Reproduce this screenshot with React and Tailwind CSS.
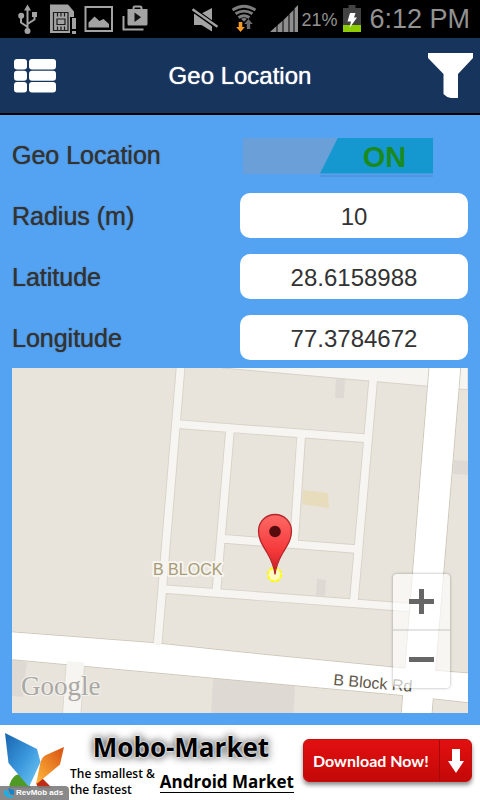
import React, { useState } from 'react'

const UsbIcon = () => (
  <svg className="w-[26px] h-[38px]" viewBox="16 0 26 38" fill="none" stroke="#a3a3a3" strokeWidth="2">
    <path d="M27.500 9v21M27.500 27l-6.500-4.500v-6M27.500 24l7-4.500v-5" />
    <path d="M27.500 4.500l3.500 6h-7z" fill="#a3a3a3" stroke="none" />
    <circle cx="21.200" cy="15.800" r="3" fill="#a3a3a3" stroke="none" />
    <path d="M32 12h5v5h-5z" fill="#a3a3a3" stroke="none" />
    <circle cx="27.500" cy="31" r="3" fill="#a3a3a3" stroke="none" />
  </svg>
)

const SimIcon = () => (
  <svg className="w-[28px] h-[38px]" viewBox="49 0 28 38" fill="#a3a3a3">
    <path d="M50 4.500h18l6 7v5.500h-4v16H50z" />
    <path d="M72 18h4v11h-4zM72 31h4v3h-4z" />
    <g fill="none" stroke="#1c1c1c" strokeWidth="1.200">
      <path d="M53.500 12.500h14.500v18H53.500zM57 19h8v5.500h-8zM57.500 12.500v4M61 12.500v4M64.500 12.500v4M57.500 30.500v-4M61 30.500v-4M64.500 30.500v-4" />
    </g>
  </svg>
)

const PictureIcon = () => (
  <svg className="w-[30px] h-[38px]" viewBox="84 0 30 38" fill="#a3a3a3">
    <path d="M85.500 7h26.500v24H85.500z" fill="none" stroke="#a3a3a3" strokeWidth="2" />
    <path d="M88.500 27.500v-5l6-6 5 4.500 4-2 5.500 5v3.500z" />
  </svg>
)

const PlayStoreIcon = () => (
  <svg className="w-[28px] h-[38px]" viewBox="121 0 28 38" fill="#a3a3a3">
    <path d="M127.500 9h20v15q0 1.500-1.500 1.500h-17q-1.500 0-1.500-1.500z" />
    <path d="M133.500 9V8q0-1.500 1.500-1.500h5q1.500 0 1.500 1.500v1M123.500 16v13.500h20" fill="none" stroke="#a3a3a3" strokeWidth="2" />
    <path d="M134.500 12.500v9.500l6.500-4.700z" fill="#111" />
  </svg>
)

const MuteIcon = () => (
  <svg className="w-[28px] h-[38px]" viewBox="190 0 28 38" fill="#a3a3a3">
    <path d="M193 13.500h7.500L211 8v23.500l-10.500-6.500H193z" />
    <path d="M189 7.500l28 20" stroke="#000" strokeWidth="5" />
    <path d="M191.500 9.200l25 17.500" stroke="#a3a3a3" strokeWidth="2.300" />
  </svg>
)

const WifiIcon = () => (
  <svg className="w-[28px] h-[38px]" viewBox="229 0 28 38" fill="none" stroke="#7d7d7d" strokeWidth="2.800">
    <path d="M231.500 10q11.500-7.500 23 0M234.500 13.800q8.500-5.300 17 0M237.500 17.500q5.500-3.500 11 0" />
    <path d="M240 18.800q3-1.800 6 0l-3 3z" fill="#7d7d7d" stroke="none" />
    <path d="M247.500 19l4.300 5h-2.600v5h-3.400v-5h-2.600z" fill="#6b6b6b" stroke="none" />
    <path d="M237.700 22h3.600v5h2.500l-4.300 5-4.300-5h2.500z" fill="#f59a23" stroke="none" />
  </svg>
)

const SignalIcon = () => (
  <svg className="w-[30px] h-[38px]" viewBox="268 0 30 38" fill="#8f8f8f">
    <path d="M269 32l6.500-6V32zM276.500 25.200l5-4.500V32h-5zM282.500 20l5-5V32h-5zM288.500 14l4-4V32h-4zM293.500 8.500l3.500-3.500v27h-3.500z" />
  </svg>
)

const BatteryIcon = () => (
  <svg className="w-[18px] h-[38px]" viewBox="342 0 18 38">
    <path d="M347.500 5h7v3h5.500v24h-18V8h5.500z" fill="#424242" />
    <path d="M342 25h18v7h-18z" fill="#8ccc00" />
    <path d="M349 13h5.500l-1.500 4.500h3L348.500 28l1.500-6.500h-3.500z" fill="#fff" />
  </svg>
)

const ListIcon = () => (
  <svg className="w-[42px] h-[34px]" viewBox="0 0 42 34" fill="#fff">
    <rect x="0" y="0" width="13" height="10.500" rx="3" />
    <rect x="15" y="0" width="27" height="10.500" rx="3" />
    <rect x="0" y="11.800" width="13" height="10" rx="3" />
    <rect x="15" y="11.800" width="27" height="10" rx="3" />
    <rect x="0" y="23" width="13" height="10.500" rx="3" />
    <rect x="15" y="23" width="27" height="10.500" rx="3" />
  </svg>
)

const FunnelIcon = () => (
  <svg className="w-[45px] h-[45px]" viewBox="0 0 45 45" fill="#fff">
    <path d="M0 0h45v5L30 21v24h-7q-5-1-7.500-4V21L0 5z" />
  </svg>
)

const MapDrawing = () => (
  <svg
    className="absolute inset-0 w-full h-full"
    viewBox="12 368 456 345"
    preserveAspectRatio="xMidYMid slice"
  >
    <rect x="12" y="368" width="456" height="345" fill="#e8e4dc" />

    {/* Buildings */}
    <g fill="#dedad3">
      <path d="M336 377l9 1-1 20h-9zM453.700 460l14.300 1v14l-15-1.300zM317 579l9 1-1 16-9-.7z" />
      <path d="M12 660l15 2-4 35-11-1zM213.300 678l81.700 8-1.700 27H211z" />
    </g>
    <path d="M303 490l25 3 1 15-27-3.700z" fill="#e7dcbb" />

    {/* Small streets: casing first, then fill */}
    <g fill="none" stroke="#d8d2c7" strokeWidth="9.500">
      <path d="M180.700 366L157.500 646M178 424.200l190 14.200M230 430l-13.500 160M301.500 433L294 543M373.500 376L353.700 603M221 538.700L356 549M163 589l247 18.500" />
      <path d="M75.500 662L71.500 716" strokeWidth="19" />
    </g>
    <path d="M222 368l246 21.800V360H222z" fill="#f6f5f1" stroke="#d8d2c7" />
    <g fill="none" stroke="#f6f5f1" strokeWidth="7.700">
      <path d="M180.700 366L157.500 646M178 424.200l190 14.200M230 430l-13.500 160M301.500 431L294 543M373.500 376L353.700 603M221 538.700L356 549M163 589l247 18.500" />
      <path d="M75.500 662L71.500 716" strokeWidth="17.500" />
    </g>

    {/* Main roads */}
    <g stroke="#cbc4b4" strokeWidth="1.500">
      <path d="M429.500 366h31L431.500 715H401.500z" />
      <path d="M10 632l143.300 11L240 652.300l165 16.200L470 673.500v29L401.700 695 240 680.300 10 659z" />
    </g>
    <g fill="#fff">
      <path d="M429.500 366h31L431.500 715H401.500z" />
      <path d="M10 632l143.300 11L240 652.300l165 16.200L470 673.500v29L401.700 695 240 680.300 10 659z" />
    </g>
    <path d="M153.900 640h7.700l-.3 5h-7.700zM67 661l17.500 1.500-.3 5-17.500-1z" fill="#f6f5f1" />

    {/* Labels */}
    <g className="[font-family:'Liberation_Sans',sans-serif] text-[16px]" strokeLinejoin="round">
      <text x="153" y="575" fill="#a89b78" stroke="#f6f4ee" strokeWidth="4" paintOrder="stroke">B BLOCK</text>
      <text x="333" y="685" fill="#5f5848" transform="rotate(5 333 685)">B Block Rd</text>
    </g>
    <text x="21" y="695" fill="#aaa8a4" stroke="#f3f1ec" strokeWidth="2" paintOrder="stroke" className="[font-family:'Liberation_Serif',serif] text-[27px]">Google</text>

    {/* Radius circle and pin */}
    <circle cx="274.500" cy="574.500" r="6.700" fill="#fdfbc0" stroke="#ff0" strokeWidth="2" strokeDasharray="4 1.200" />
    <defs>
      <linearGradient id="pin" x1="0" y1="0" x2="0" y2="1">
        <stop offset="0" stopColor="#fc6a66" />
        <stop offset="0.6" stopColor="#f5393b" />
        <stop offset="1" stopColor="#c41d22" />
      </linearGradient>
    </defs>
    <path d="M275 574.500c-.8-9-4-15-8-22-4.500-7.500-8.500-13-8.500-21.500a16.500 16.500 0 0 1 33 0c0 8.500-4 14-8.500 21.500-4 7-7.200 13-8 22z" fill="url(#pin)" stroke="#b5262b" strokeWidth="1.300" />
    <circle cx="275" cy="531.500" r="5.800" fill="#560b0d" />
  </svg>
)

const AdLogo = () => (
  <svg className="absolute left-0 top-0 w-[69px] h-[75px]" viewBox="0 725 69 75">
    <defs>
      <linearGradient id="wingBlue" x1="0" y1="0" x2="1" y2="1">
        <stop offset="0" stopColor="#1764ad" />
        <stop offset="0.5" stopColor="#3a96dc" />
        <stop offset="1" stopColor="#75cdf5" />
      </linearGradient>
      <linearGradient id="wingOrange" x1="1" y1="0" x2="0" y2="1">
        <stop offset="0" stopColor="#d94f12" />
        <stop offset="1" stopColor="#ffbb3d" />
      </linearGradient>
    </defs>
    <path d="M9 788q1-9 7-13l8-2 7 15z" fill="#4f9a26" />
    <path d="M36 783l6-5 10 10H38z" fill="#bd2d18" />
    <path d="M5 733l32 16 3.500 13L29 787 8.500 763z" fill="url(#wingBlue)" />
    <path d="M64 747l-19 8.500q-4 3-5 9l-4 20 24-20z" fill="url(#wingOrange)" />
  </svg>
)

const Field = ({ id, label, defaultValue }) => (
  <div className="grid grid-cols-2 items-center h-[45px]">
    <label htmlFor={id} className="pt-[3px] text-[25px] [text-shadow:0_0_1px_currentColor]">{label}</label>
    <input
      id={id}
      type="text"
      inputMode="decimal"
      defaultValue={defaultValue}
      className="w-full h-full min-w-0 rounded-[10px] bg-white text-center text-[24px] pt-[3px] outline-none"
    />
  </div>
)

function App() {
  const [enabled, setEnabled] = useState(true)

  return (
    <div className="min-h-screen flex flex-col bg-[#54a2f2] text-[#333] font-['Liberation_Sans',sans-serif]">
      {/* Status bar */}
      <div className="h-[38px] shrink-0 bg-black flex items-center justify-between pl-4 pr-[10px] text-[#929292]">
        <div className="flex items-center gap-[7px]">
          <UsbIcon />
          <SimIcon />
          <PictureIcon />
          <PlayStoreIcon />
        </div>
        <div className="flex items-center">
          <div className="flex items-center gap-[11px]">
            <MuteIcon />
            <WifiIcon />
            <SignalIcon />
          </div>
          <span className="ml-[2px] mr-[6px] pt-[2px] text-[18px]">21%</span>
          <BatteryIcon />
          <span className="ml-2 text-[27px]">6:12 PM</span>
        </div>
      </div>

      {/* Header */}
      <header className="h-[77px] shrink-0 bg-[#17355c] border-b-2 border-black grid grid-cols-[1fr_auto_1fr] items-center px-[7px]">
        <button type="button" aria-label="Menu" className="justify-self-start pl-[7px]">
          <ListIcon />
        </button>
        <h1 className="pt-px text-[24px] text-white [text-shadow:0_0_1px_currentColor]">Geo Location</h1>
        <button type="button" aria-label="Filter" className="justify-self-end">
          <FunnelIcon />
        </button>
      </header>

      <main className="flex-1 flex flex-col px-3 pt-[17px] pb-3">
        <form className="flex flex-col gap-4">
          <div className="grid grid-cols-2 items-center h-[45px]">
            <label htmlFor="geo" className="pt-[3px] text-[25px] [text-shadow:0_0_1px_currentColor]">Geo Location</label>
            <label className="relative block w-[190px] h-[36px] ml-[3px] mt-[2px] bg-[#6b9fd8] cursor-pointer">
              <input
                id="geo"
                type="checkbox"
                checked={enabled}
                onChange={(e) => setEnabled(e.target.checked)}
                className="absolute inset-0 w-full h-full opacity-0"
              />
              <span className="absolute right-0 top-[37px] w-[113px] h-[2px] bg-[#4f95e2]" />
              <span className="absolute right-0 top-0 w-[113px] h-full bg-[#1598cf] [clip-path:polygon(18px_0,100%_0,100%_100%,0_100%)] flex items-center justify-center pl-4 pt-[5px] text-[29px] font-bold text-[#1a8a1f]">
                {enabled ? 'ON' : 'OFF'}
              </span>
            </label>
          </div>
          <Field id="radius" label="Radius (m)" defaultValue="10" />
          <Field id="latitude" label="Latitude" defaultValue="28.6158988" />
          <Field id="longitude" label="Longitude" defaultValue="77.3784672" />
        </form>

        {/* Map */}
        <div className="relative flex-1 min-h-[300px] mt-2 overflow-hidden">
          <MapDrawing />
          <div className="absolute right-[18px] bottom-[25px] w-[57px] flex flex-col rounded-sm bg-white/65 shadow-[0_0_3px_rgba(0,0,0,0.35)]">
            <button type="button" aria-label="Zoom in" className="h-[57px] flex items-center justify-center border-b-2 border-black/10">
              <svg className="w-[25px] h-[25px]" viewBox="0 0 25 25" fill="#666">
                <path d="M10 0h5v10h10v5H15v10h-5V15H0v-5h10z" />
              </svg>
            </button>
            <button type="button" aria-label="Zoom out" className="h-[57px] flex items-center justify-center">
              <svg className="w-[25px] h-[25px]" viewBox="0 0 25 25" fill="#666">
                <path d="M0 10h25v5H0z" />
              </svg>
            </button>
          </div>
        </div>
      </main>

      {/* Ad banner */}
      <footer className="h-[75px] shrink-0 bg-white flex items-start overflow-hidden font-['Open_Sans',sans-serif] font-bold text-black">
        <div className="relative w-[69px] h-full shrink-0">
          <AdLogo />
          <div className="absolute left-0 bottom-0 w-[69px] h-[14px] rounded-tr bg-[#7c7c7c]/90 flex items-center gap-[2px] pl-1 text-white text-[8px] leading-none font-['Liberation_Sans',sans-serif]">
            <svg className="w-[10px] h-[10px] shrink-0" viewBox="0 0 10 10">
              <path d="M0 2l4 1 1 4 5 2-3 1-4-1-3-3z" fill="#19b0ec" />
              <path d="M4 0l6 2v5L6 6z" fill="#1583c9" />
            </svg>
            <span className="whitespace-nowrap">RevMob ads</span>
          </div>
        </div>
        <a href="#market" className="flex-1 flex flex-col whitespace-nowrap">
          <span className="self-center pr-[10px] pt-[6px] text-[26px] leading-[32px] [text-shadow:0_0_2px_#fff,0_0_3px_#fff,0_0_8px_#555,0_0_8px_#777]">Mobo-Market</span>
          <span className="flex items-center justify-between pl-px pr-[9px]">
            <span className="text-[12px] leading-4 pt-[3px] font-semibold">
              The smallest &amp;
              <br />
              the fastest
            </span>
            <span className="text-[17px] leading-[20px] pt-1 border-b border-black">Android Market</span>
          </span>
        </a>
        <a
          href="#download"
          className="mt-[14px] mr-2 w-[169px] h-[43px] shrink-0 rounded-md bg-linear-to-b from-[#e21010] to-[#c40808] border border-[#c01010] shadow-[0_3px_4px_rgba(0,0,0,0.45)] flex items-center justify-between text-white font-['Lato',sans-serif] text-[16px] whitespace-nowrap"
        >
          <span className="pl-[9px]">Download Now!</span>
          <span className="h-full w-[32px] border-l border-[#a80808] flex items-center justify-center">
            <svg className="w-[16px] h-[24px]" viewBox="0 0 16 24" fill="#fff">
              <path d="M4 0h8v12h4l-8 12-8-12h4z" />
            </svg>
          </span>
        </a>
      </footer>
    </div>
  )
}

export default App
